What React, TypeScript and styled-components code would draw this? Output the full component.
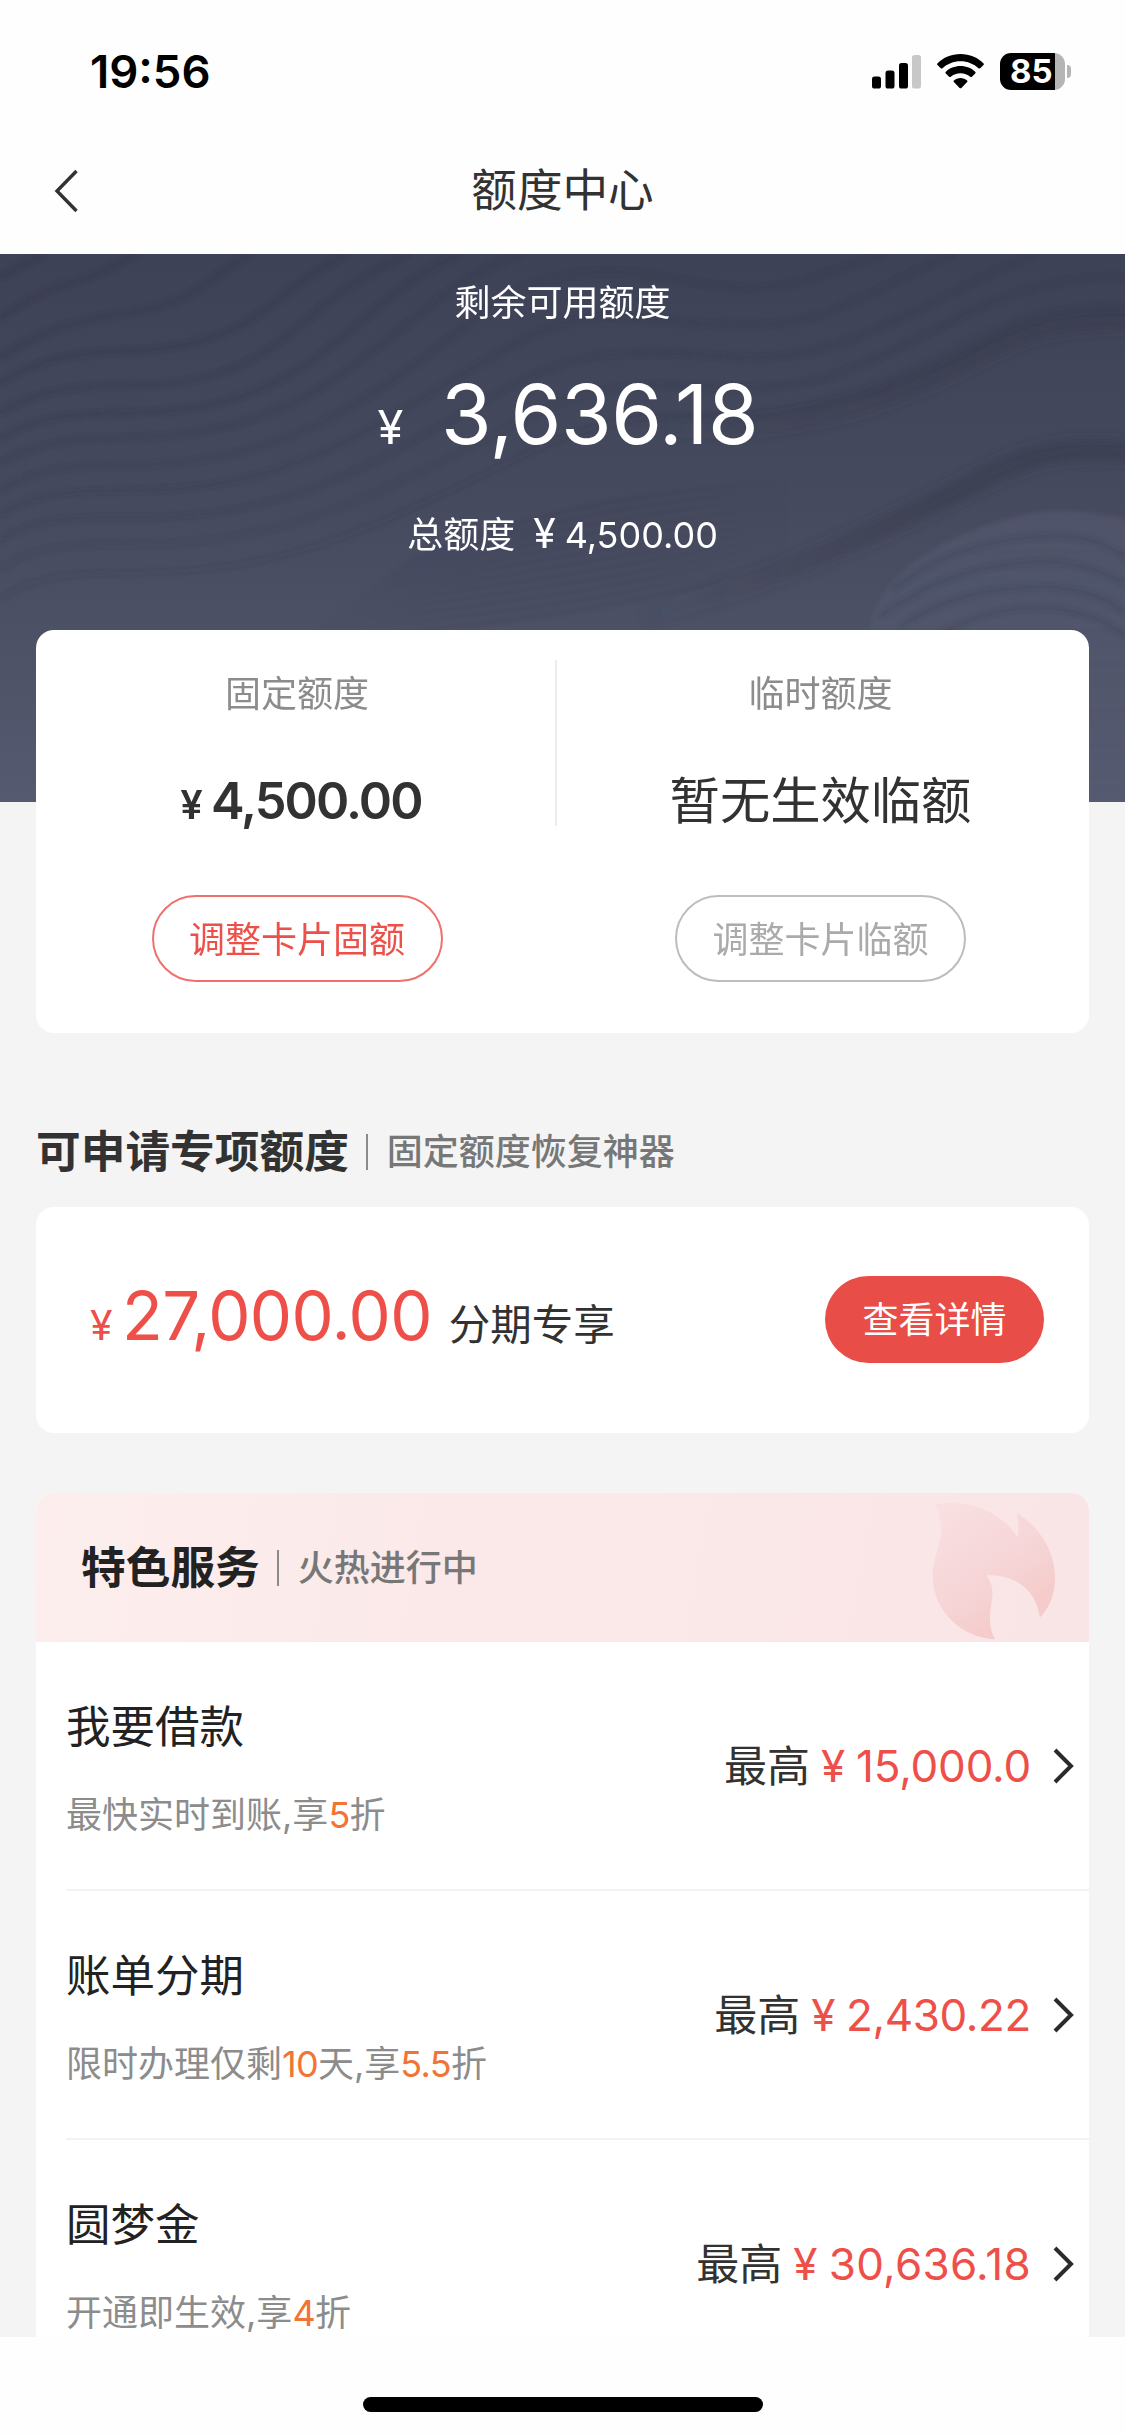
import React from "react";
import styled, { createGlobalStyle } from "styled-components";

const GlobalStyle = createGlobalStyle`
  * { box-sizing: border-box; }
  body {
    margin: 0;
    background: #fefefe;
    font-family: Inter, "Noto Sans CJK SC", sans-serif;
    color: #323232;
  }
`;

const Page = styled.div`
  width: 1125px;
  height: 2435px;
  display: flex;
  flex-direction: column;
  overflow: hidden;
`;

const StatusBar = styled.div`
  flex: none;
  height: 143px;
  padding: 0 54px 0 90px;
  display: flex;
  align-items: center;
  justify-content: space-between;
`;

const Clock = styled.div`
  font-size: 45.5px;
  font-weight: 600;
  line-height: 60px;
  color: #000;
`;

const StatusIcons = styled.div`
  display: flex;
  align-items: center;
  gap: 16px;
`;

const BatteryIcon = styled.div`
  display: flex;
  align-items: center;
  gap: 2px;
`;

const BatteryBody = styled.div`
  width: 65px;
  height: 37px;
  border-radius: 11px;
  background: linear-gradient(90deg, #000 55px, #b5b5b5 55px);
  color: #fff;
  font-size: 33px;
  font-weight: 700;
  line-height: 37px;
  padding-left: 10px;
`;

const BatteryCap = styled.div`
  width: 4px;
  height: 13px;
  border-radius: 0 5px 5px 0;
  background: #b5b5b5;
`;

const NavBar = styled.div`
  flex: none;
  height: 111px;
  padding: 0 54px 16px;
  display: grid;
  grid-template-columns: 1fr auto 1fr;
  align-items: center;
`;

const NavTitle = styled.div`
  font-size: 45.6px;
  line-height: 60px;
`;

const Content = styled.main`
  flex: 1;
  min-height: 0;
  overflow: hidden;
  background: #f4f4f4;
`;

const Hero = styled.section`
  position: relative;
  height: 548px;
  padding-top: 19px;
  background: linear-gradient(180deg, #3e4256 0%, #464a5e 45%, #555a70 100%);
  color: #fff;
  display: flex;
  flex-direction: column;
  align-items: center;
`;

const Waves = styled.svg`
  position: absolute;
  inset: 0;
`;

const HeroLine = styled.div<{ $top?: number }>`
  position: relative;
  height: 60px;
  margin-top: ${(p) => p.$top ?? 0}px;
  font-size: 36px;
  line-height: 60px;
  display: flex;
  align-items: baseline;
`;

const HeroAmount = styled.div`
  position: relative;
  height: 100px;
  margin-top: 32px;
  padding-left: 11px;
  display: flex;
  align-items: baseline;
  line-height: 100px;
  font-size: 82px;
  letter-spacing: -0.4px;
`;

const Yen = styled.span<{ $size: number; $gap?: number; $before?: number }>`
  font-size: ${(p) => p.$size}px;
  margin-right: ${(p) => p.$gap ?? 0}px;
  margin-left: ${(p) => p.$before ?? 0}px;
`;

const Card = styled.section`
  position: relative;
  margin: 0 36px;
  background: #fff;
  border-radius: 18px;
  overflow: hidden;
`;

const QuotaCard = styled(Card)`
  margin-top: -172px;
  height: 403px;
  padding-right: 8px;
  display: grid;
  grid-template-columns: 519px 2px 1fr;
`;

const QuotaColumn = styled.div`
  padding: 34px 0 0 3px;
  display: flex;
  flex-direction: column;
  align-items: center;
`;

const QuotaDivider = styled.div`
  height: 166px;
  margin-top: 30px;
  background: #ececec;
`;

const QuotaLabel = styled.div`
  font-size: 36px;
  line-height: 60px;
  color: #8c8c8c;
`;

const QuotaValue = styled.div<{ $bold?: boolean }>`
  height: 70px;
  margin-top: 42px;
  padding-left: ${(p) => (p.$bold ? 8 : 0)}px;
  font-size: ${(p) => (p.$bold ? 50.5 : 50.3)}px;
  line-height: 70px;
  font-weight: ${(p) => (p.$bold ? 600 : 400)};
  letter-spacing: ${(p) => (p.$bold ? "-1.9px" : "0")};
  display: flex;
  align-items: baseline;
`;

const OutlineButton = styled.button<{ $tone: string; $line: string }>`
  margin-top: 59px;
  width: 291px;
  height: 87px;
  padding: 0 0 4px;
  border: 2px solid ${(p) => p.$line};
  border-radius: 44px;
  background: #fff;
  color: ${(p) => p.$tone};
  font: inherit;
  font-size: 36px;
`;

const SectionHeading = styled.div`
  margin: 89px 36px 25px;
  height: 60px;
  display: flex;
  align-items: center;
`;

const HeadingTitle = styled.h2`
  margin: 0;
  font-size: 44.7px;
  font-weight: 700;
  line-height: 60px;
`;

const HeadingRule = styled.span`
  width: 2px;
  height: 36px;
  margin: 0 19px 0 17px;
  background: #8a8a8a;
`;

const HeadingNote = styled.span`
  font-size: 36px;
  line-height: 60px;
  font-weight: 500;
  color: #777;
`;

const OfferCard = styled(Card)`
  height: 226px;
  padding: 0 45px 0 54px;
  display: flex;
  align-items: center;
  justify-content: space-between;
`;

const OfferAmount = styled.div`
  display: flex;
  align-items: baseline;
  line-height: 90px;
  font-size: 67px;
  letter-spacing: -0.6px;
  color: #ee4f49;
`;

const OfferNote = styled.span`
  margin-left: 17px;
  font-size: 41.5px;
  letter-spacing: 0;
  color: #323232;
`;

const SolidButton = styled.button`
  width: 219px;
  height: 87px;
  margin-bottom: 1px;
  padding: 0 0 5px;
  border: 0;
  border-radius: 44px;
  background: #e94d48;
  color: #fff;
  font: inherit;
  font-size: 36px;
`;

const ServiceCard = styled(Card)`
  margin-top: 60px;
  height: 900px;
`;

const ServiceHeader = styled.header`
  height: 149px;
  padding: 0 33px 2px 45px;
  background: linear-gradient(100deg, #fdeeee 0%, #fbe9e9 40%, #fae5e6 100%);
  color: #222;
  display: flex;
  justify-content: space-between;
`;

const ServiceHeading = styled.div`
  display: flex;
  align-items: center;
  padding-top: 2px;
`;

const FlameIcon = styled.svg`
  align-self: flex-end;
`;

const ServiceRow = styled.div`
  height: 249px;
  margin-left: 30px;
  padding-right: 15px;
  border-bottom: 2px solid #f2f2f2;
  display: flex;
  align-items: center;
  justify-content: space-between;
`;

const ServiceText = styled.div`
  display: flex;
  flex-direction: column;
  padding-top: 5px;
`;

const ServiceName = styled.div`
  font-size: 44.5px;
  line-height: 60px;
  color: #222;
`;

const ServiceDesc = styled.div`
  margin-top: 33px;
  font-size: 36px;
  line-height: 50px;
  color: #8c8c8c;
`;

const Accent = styled.span`
  color: #f37335;
  letter-spacing: -0.7px;
`;

const ServiceLimit = styled.div`
  display: flex;
  align-items: center;
  font-size: 43px;
  line-height: 60px;
`;

const LimitAmount = styled.span<{ $tracking: number }>`
  display: flex;
  align-items: baseline;
  font-size: 44px;
  letter-spacing: ${(p) => p.$tracking}px;
  color: #ee4f49;
  margin-right: 21px;
`;

const HomeBar = styled.footer`
  flex: none;
  height: 98px;
  display: flex;
  justify-content: center;
  padding-top: 60px;
  background: #fefefe;
`;

const HomeIndicator = styled.div`
  width: 400px;
  height: 15px;
  border-radius: 8px;
  background: #000;
`;

const leftWaves = [
  "M0 80C60 50 100 30 130 12",
  "M0 205C90 140 160 110 240 90C310 70 350 40 410 12",
  "M0 325C120 240 230 210 370 190C580 170 640 70 750 12",
  "M0 400C150 300 300 308 440 300C700 275 780 190 860 130C930 75 980 40 1040 12",
  "M0 490C150 395 300 410 450 405C760 390 860 250 980 160C1070 90 1140 50 1220 12",
  "M0 565C150 475 300 495 460 485C800 470 960 320 1100 200C1200 110 1290 50 1380 12",
  "M0 640C150 550 300 570 460 560C840 540 1020 380 1200 240C1320 140 1420 60 1560 12",
  "M0 722C150 625 300 655 460 643C860 625 1080 460 1290 310C1450 190 1600 20 1950 75",
  "M0 795C150 700 300 730 500 717C880 700 1120 530 1360 390C1540 280 1680 190 1850 200",
  "M0 870C150 775 300 812 500 800C900 785 1160 620 1420 470C1580 380 1700 310 1900 310",
  "M0 955C150 860 300 890 500 880C900 865 1200 700 1500 545C1640 470 1760 410 1950 405",
  "M0 1045C150 950 300 975 500 965C920 950 1200 790 1500 650C1680 560 1800 510 1980 500",
];

const rightWaves = [
  "M1950 75C2100 95 2250 150 2450 80L2650 12",
  "M1850 200C2000 205 2300 265 2500 180C2680 105 2760 50 2860 12",
  "M1900 310C2050 300 2150 328 2300 322C2600 305 2800 130 3110 12",
  "M1950 405C2150 410 2350 430 2500 375C2820 265 2980 80 3375 80",
  "M1980 500C2400 530 2700 400 2900 300C3050 220 3150 170 3375 180",
];

const innerWaves = [
  "M2680 1020C2850 880 3050 855 3200 860C3290 870 3340 890 3375 925",
  "M2640 1100C2830 960 3000 935 3160 935C3260 945 3330 975 3375 1000",
  "M2700 1130C2860 1025 3000 1010 3160 1012C3260 1020 3330 1050 3375 1090",
  "M2820 1150C2960 1080 3040 1070 3160 1075C3260 1085 3330 1120 3375 1160",
];

// Fine strands that run up to the lower ridge.
const strands = Array.from(
  { length: 12 },
  (_, i) =>
    `M${900 + i * 30} ${1170 - i * 22}C${1400 + i * 20} ${1130 - i * 32} ${1850 + i * 10} ${1090 - i * 34} ${2380 + i * 10} ${930 - i * 22}`
);

function HeroWaves() {
  return (
    <Waves width="1125" height="548" viewBox="0 12 3375 1644">
      <defs>
        <linearGradient id="blob" x1="0" y1="0" x2="0" y2="1">
          <stop offset="0" stopColor="#565b72" stopOpacity=".55" />
          <stop offset="1" stopColor="#565b72" stopOpacity=".25" />
        </linearGradient>
        <linearGradient
          id="ridge"
          gradientUnits="userSpaceOnUse"
          x1="1900"
          y1="0"
          x2="2800"
          y2="0"
        >
          <stop offset="0" stopColor="#343849" stopOpacity="0" />
          <stop offset="1" stopColor="#343849" stopOpacity="1" />
        </linearGradient>
        <linearGradient
          id="strand"
          gradientUnits="userSpaceOnUse"
          x1="900"
          y1="0"
          x2="2400"
          y2="0"
        >
          <stop offset="0" stopColor="#323648" stopOpacity="0" />
          <stop offset=".35" stopColor="#323648" stopOpacity="1" />
          <stop offset=".65" stopColor="#323648" stopOpacity="1" />
          <stop offset="1" stopColor="#323648" stopOpacity="0" />
        </linearGradient>
        <filter id="soft" x="-5%" y="-5%" width="110%" height="110%">
          <feGaussianBlur stdDeviation="7" />
        </filter>
        <filter id="shade" x="-10%" y="-20%" width="120%" height="140%">
          <feGaussianBlur stdDeviation="18" />
        </filter>
      </defs>
      <g fill="none" stroke="url(#ridge)" strokeWidth="60" filter="url(#shade)">
        <path
          d="M1980 530C2400 560 2700 430 2900 330C3050 250 3150 200 3440 210"
          opacity=".4"
        />
        <path
          d="M1900 1110C2300 1005 2700 810 2900 710C3100 600 3200 585 3440 610"
          opacity=".5"
        />
      </g>
      <path
        d="M2610 1140C2620 1000 2800 850 3100 790C3200 775 3300 790 3440 820L3440 1700L2610 1700Z"
        fill="url(#blob)"
        filter="url(#soft)"
      />
      <g fill="none" filter="url(#soft)" stroke="#323648" strokeWidth="14">
        {leftWaves.map((d, i) => (
          <path key={d} d={d} opacity={0.46 - i * 0.03} />
        ))}
        {rightWaves.map((d) => (
          <path key={d} d={d} opacity=".28" />
        ))}
        {innerWaves.map((d) => (
          <path key={d} d={d} opacity=".22" />
        ))}
        {strands.map((d) => (
          <path key={d} d={d} stroke="url(#strand)" strokeWidth="10" opacity=".09" />
        ))}
      </g>
    </Waves>
  );
}

function SignalIcon() {
  return (
    <svg width="49" height="35" viewBox="0 0 49 35">
      <rect x="0" y="22.5" width="9" height="12" rx="2.6" />
      <rect x="13.5" y="16.5" width="9" height="18" rx="2.6" />
      <rect x="27" y="9" width="9" height="25.5" rx="2.6" />
      <rect x="40" y="1" width="9" height="33.5" rx="2.6" fill="#c8c8c8" />
    </svg>
  );
}

function WifiIcon() {
  return (
    <svg width="47" height="35" viewBox="0 0 47 35">
      <path d="M23.5 0C32.600 0 40.900 3.600 46.400 9.200C47 9.800 47 10.500 46.500 11L43.200 14.200C42.700 14.700 42 14.700 41.500 14.200C36.900 9.900 30.500 7.200 23.500 7.200S10.100 9.900 5.500 14.200C5 14.700 4.300 14.700 3.800 14.200L.5 11C0 10.500 0 9.800 .6 9.200C6.100 3.600 14.400 0 23.500 0Z" />
      <path d="M23.500 12.100C29.400 12.100 34.600 14.300 38.200 17.800C38.700 18.300 38.700 19 38.200 19.500L34.900 22.700C34.400 23.200 33.700 23.200 33.200 22.700C30.700 20.500 27.300 19.200 23.500 19.200S16.300 20.500 13.800 22.700C13.300 23.200 12.600 23.200 12.100 22.700L8.800 19.500C8.300 19 8.300 18.300 8.800 17.800C12.400 14.300 17.600 12.100 23.500 12.100Z" />
      <path d="M23.500 24C26.100 24 28.400 24.900 30.100 26.400C30.600 26.900 30.600 27.600 30.100 28.100L24.400 33.900C23.900 34.400 23.100 34.400 22.600 33.900L16.900 28.100C16.400 27.600 16.400 26.900 16.900 26.400C18.600 24.900 20.900 24 23.500 24Z" />
    </svg>
  );
}

function BackIcon() {
  return (
    <svg width="24" height="44" viewBox="0 0 24 44" fill="none" stroke="#323232" strokeWidth="3.4">
      <path d="M22.500 2L3 22L22.500 42" />
    </svg>
  );
}

function ArrowIcon() {
  return (
    <svg width="22" height="36" viewBox="0 0 22 36" fill="none" stroke="#2b2b2b" strokeWidth="4">
      <path d="M3 2L19 18L3 34" />
    </svg>
  );
}

function Flame() {
  return (
    <FlameIcon width="124" height="138" viewBox="0 0 370 412">
      <defs>
        <linearGradient id="flame" x1="0.2" y1="0" x2="0.8" y2="1">
          <stop offset="0" stopColor="#f9dfe0" />
          <stop offset=".5" stopColor="#f6d5d7" />
          <stop offset=".8" stopColor="#f5cccb" />
        </linearGradient>
      </defs>
      <path
        fill="url(#flame)"
        d="M8 8C90 -8 190 10 256 105C260 80 258 55 252 32C330 80 372 160 367 240C363 290 345 320 322 345C312 270 260 218 162 218C185 250 182 275 176 310C170 350 172 380 188 410C90 405 5 330 2 225C2 160 30 130 27 75C26 45 18 25 8 8Z"
      />
    </FlameIcon>
  );
}

const services = [
  {
    name: "我要借款",
    desc: ["最快实时到账,享", "5", "折"],
    limit: "15,000.0",
    tracking: -0.2,
  },
  {
    name: "账单分期",
    desc: ["限时办理仅剩", "10", "天,享", "5.5", "折"],
    limit: "2,430.22",
    tracking: -0.4,
  },
  {
    name: "圆梦金",
    desc: ["开通即生效,享", "4", "折"],
    limit: "30,636.18",
    tracking: 0.3,
  },
];

export default function App() {
  return (
    <>
      <GlobalStyle />
      <Page>
        <StatusBar>
          <Clock>19:56</Clock>
          <StatusIcons>
            <SignalIcon />
            <WifiIcon />
            <BatteryIcon>
              <BatteryBody>85</BatteryBody>
              <BatteryCap />
            </BatteryIcon>
          </StatusIcons>
        </StatusBar>
        <NavBar>
          <BackIcon />
          <NavTitle>额度中心</NavTitle>
        </NavBar>
        <Content>
          <Hero>
            <HeroWaves />
            <HeroLine>剩余可用额度</HeroLine>
            <HeroAmount>
              <Yen $size={47} $gap={38}>¥</Yen>3,636.18
            </HeroAmount>
            <HeroLine $top={38}>
              总额度<Yen $size={41} $before={18} $gap={9}>¥</Yen>4,500.00
            </HeroLine>
          </Hero>
          <QuotaCard>
            <QuotaColumn>
              <QuotaLabel>固定额度</QuotaLabel>
              <QuotaValue $bold>
                <Yen $size={40} $gap={10}>¥</Yen>4,500.00
              </QuotaValue>
              <OutlineButton $tone="#ee4f49" $line="#f0706b">调整卡片固额</OutlineButton>
            </QuotaColumn>
            <QuotaDivider />
            <QuotaColumn>
              <QuotaLabel>临时额度</QuotaLabel>
              <QuotaValue>暂无生效临额</QuotaValue>
              <OutlineButton $tone="#aaaaaa" $line="#bdbdbd">调整卡片临额</OutlineButton>
            </QuotaColumn>
          </QuotaCard>
          <SectionHeading>
            <HeadingTitle>可申请专项额度</HeadingTitle>
            <HeadingRule />
            <HeadingNote>固定额度恢复神器</HeadingNote>
          </SectionHeading>
          <OfferCard>
            <OfferAmount>
              <Yen $size={41} $gap={10}>¥</Yen>27,000.00
              <OfferNote>分期专享</OfferNote>
            </OfferAmount>
            <SolidButton>查看详情</SolidButton>
          </OfferCard>
          <ServiceCard>
            <ServiceHeader>
              <ServiceHeading>
                <HeadingTitle>特色服务</HeadingTitle>
                <HeadingRule />
                <HeadingNote>火热进行中</HeadingNote>
              </ServiceHeading>
              <Flame />
            </ServiceHeader>
            {services.map((service) => (
              <ServiceRow key={service.name}>
                <ServiceText>
                  <ServiceName>{service.name}</ServiceName>
                  <ServiceDesc>
                    {service.desc.map((part, i) =>
                      i % 2 ? <Accent key={i}>{part}</Accent> : part
                    )}
                  </ServiceDesc>
                </ServiceText>
                <ServiceLimit>
                  最高
                  <LimitAmount $tracking={service.tracking}>
                    <Yen $size={44} $before={11} $gap={11}>¥</Yen>
                    {service.limit}
                  </LimitAmount>
                  <ArrowIcon />
                </ServiceLimit>
              </ServiceRow>
            ))}
          </ServiceCard>
        </Content>
        <HomeBar>
          <HomeIndicator />
        </HomeBar>
      </Page>
    </>
  );
}
